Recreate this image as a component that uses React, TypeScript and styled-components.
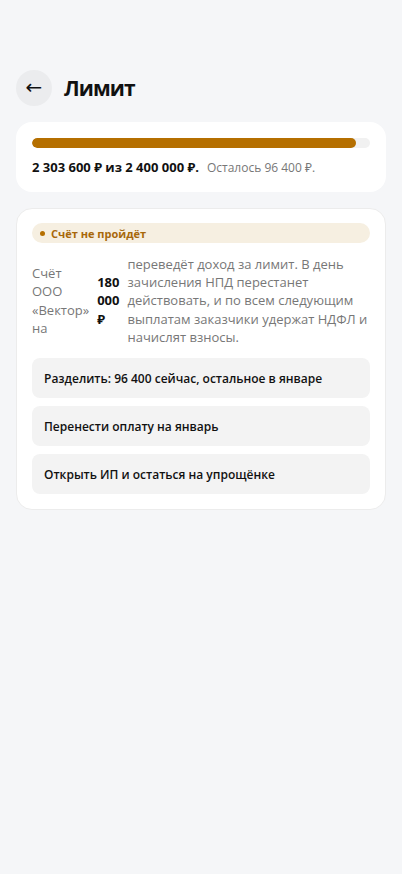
import React from "react";
import styled, { createGlobalStyle } from "styled-components";

const Global = createGlobalStyle`
  html, body { margin: 0; padding: 0; background: #f5f6f8; }
  body { font-family: "Open Sans", "Noto Sans", sans-serif; color: #111; }
  * { box-sizing: border-box; }
`;

const Page = styled.div`
  min-height: 874px;
  padding: 70px 16px 16px;
  display: flex;
  flex-direction: column;
  gap: 16px;
`;

const Header = styled.div`
  display: flex;
  align-items: center;
  gap: 12px;
`;

const BackButton = styled.button`
  width: 36px;
  height: 36px;
  border-radius: 50%;
  border: none;
  background: #ebecee;
  display: flex;
  align-items: center;
  justify-content: center;
  font-size: 20px;
  color: #111;
  padding: 0 0 2px;
  font-family: "DejaVu Sans", sans-serif;
`;

const Title = styled.h1`
  margin: 0;
  font-size: 21px;
  font-weight: 700;
  letter-spacing: -0.9px;
`;

const Card = styled.div<{ $bordered?: boolean }>`
  background: #fff;
  border-radius: 16px;
  padding: ${(p) => (p.$bordered ? "14px 15px 15px" : "16px")};
  border: ${(p) => (p.$bordered ? "1px solid #ececec" : "none")};
  display: flex;
  flex-direction: column;
  gap: ${(p) => (p.$bordered ? "12px" : "11px")};
`;

const Track = styled.div`
  height: 10px;
  border-radius: 5px;
  background: #f1f1f1;
  overflow: hidden;
`;

const Fill = styled.div`
  height: 100%;
  border-radius: 5px;
  background: #b56f00;
`;

const Summary = styled.div`
  font-size: 13px;
  line-height: 16px;
  display: flex;
  align-items: baseline;
  gap: 8px;
`;

const Strong = styled.span`
  font-weight: 700;
`;

const Muted = styled.span`
  color: #777;
  font-size: 12px;
`;

const Badge = styled.div`
  height: 20px;
  border-radius: 10px;
  background: #f6efe1;
  color: #a8680a;
  font-size: 11px;
  font-weight: 700;
  display: flex;
  align-items: center;
  gap: 6px;
  padding: 0 8px;
`;

const Dot = styled.span`
  width: 5px;
  height: 5px;
  border-radius: 50%;
  background: #b56f00;
`;

const Row = styled.div`
  display: flex;
  align-items: center;
  gap: 8px;
  font-size: 13px;
  line-height: 18.2px;
  color: #777;
`;

const Amount = styled.span`
  color: #111;
  font-weight: 700;
`;

const Options = styled.div`
  display: flex;
  flex-direction: column;
  gap: 8px;
`;

const Option = styled.button`
  height: 40px;
  border: none;
  border-radius: 8px;
  background: #f3f3f3;
  text-align: left;
  padding: 0 12px;
  font-family: inherit;
  font-size: 12px;
  font-weight: 600;
  color: #111;
`;

export default function App() {
  const used = 2303600;
  const limit = 2400000;
  return (
    <>
      <Global />
      <Page>
        <Header>
          <BackButton>←</BackButton>
          <Title>Лимит</Title>
        </Header>
        <Card>
          <Track>
            <Fill style={{ width: `${(used / limit) * 100}%` }} />
          </Track>
          <Summary>
            <Strong>2 303 600 ₽ из 2 400 000 ₽.</Strong>
            <Muted>Осталось 96 400 ₽.</Muted>
          </Summary>
        </Card>
        <Card $bordered>
          <Badge>
            <Dot />
            Счёт не пройдёт
          </Badge>
          <Row>
            <span>Счёт ООО «Вектор» на</span>
            <Amount>180 000 ₽</Amount>
            <span>
              переведёт доход за лимит. В день зачисления НПД перестанет
              действовать, и по всем следующим выплатам заказчики удержат НДФЛ и
              начислят взносы.
            </span>
          </Row>
          <Options>
            <Option>Разделить: 96 400 сейчас, остальное в январе</Option>
            <Option>Перенести оплату на январь</Option>
            <Option>Открыть ИП и остаться на упрощёнке</Option>
          </Options>
        </Card>
      </Page>
    </>
  );
}
